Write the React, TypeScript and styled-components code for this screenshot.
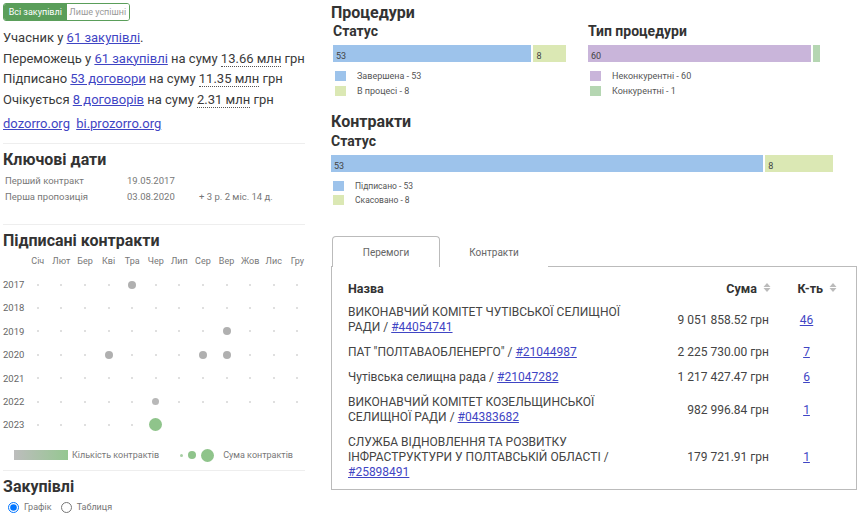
import styled, { createGlobalStyle } from "styled-components";

const GlobalStyle = createGlobalStyle`
  body {
    margin: 0;
    background: #fff;
    font-family: Roboto, "Liberation Sans", sans-serif;
    color: #333;
  }
`;

const months = ["Січ", "Лют", "Бер", "Кві", "Тра", "Чер", "Лип", "Сер", "Вер", "Жов", "Лис", "Гру"];

// dot size per year/month: 0 = none, 1 = tiny, 2 = grey, 3 = small grey, 4 = big green
const calendar: { year: string; cells: number[] }[] = [
  { year: "2017", cells: [1, 1, 1, 1, 2, 1, 1, 1, 1, 1, 1, 1] },
  { year: "2018", cells: [1, 1, 1, 1, 1, 1, 1, 1, 1, 1, 1, 1] },
  { year: "2019", cells: [1, 1, 1, 1, 1, 1, 1, 1, 2, 1, 1, 1] },
  { year: "2020", cells: [1, 1, 1, 2, 1, 1, 1, 2, 2, 1, 1, 1] },
  { year: "2021", cells: [1, 1, 1, 1, 1, 1, 1, 1, 1, 1, 1, 1] },
  { year: "2022", cells: [1, 1, 1, 1, 1, 3, 1, 1, 1, 1, 1, 1] },
  { year: "2023", cells: [1, 1, 1, 1, 1, 4, 0, 0, 0, 0, 0, 0] },
];

const rows = [
  { name: "ВИКОНАВЧИЙ КОМІТЕТ ЧУТІВСЬКОЇ СЕЛИЩНОЇ РАДИ", code: "#44054741", sum: "9 051 858.52 грн", count: "46" },
  { name: "ПАТ \"ПОЛТАВАОБЛЕНЕРГО\"", code: "#21044987", sum: "2 225 730.00 грн", count: "7" },
  { name: "Чутівська селищна рада", code: "#21047282", sum: "1 217 427.47 грн", count: "6" },
  { name: "ВИКОНАВЧИЙ КОМІТЕТ КОЗЕЛЬЩИНСЬКОЇ СЕЛИЩНОЇ РАДИ", code: "#04383682", sum: "982 996.84 грн", count: "1" },
  { name: "СЛУЖБА ВІДНОВЛЕННЯ ТА РОЗВИТКУ ІНФРАСТРУКТУРИ У ПОЛТАВСЬКІЙ ОБЛАСТІ", code: "#25898491", sum: "179 721.91 грн", count: "1" },
];

const SortIcon = () => (
  <svg width="8" height="11" viewBox="0 0 8 11" style={{ marginLeft: 6 }}>
    <path d="M4 1 L7.5 5 H0.5 Z" fill="#bbb" />
    <path d="M4 10 L7.5 6 H0.5 Z" fill="#bbb" />
  </svg>
);

export default function App() {
  return (
    <>
      <GlobalStyle />
      <Page>
        <LeftColumn>
          <Toggle>
            <ToggleButton active>Всі закупівлі</ToggleButton>
            <ToggleButton>Лише успішні</ToggleButton>
          </Toggle>
          <Summary>
            <Line>
              Учасник у <Link>61 закупівлі</Link>.
            </Line>
            <Line>
              Переможець у <Link>61 закупівлі</Link> на суму <Amount>13.66 млн</Amount> грн
            </Line>
            <Line>
              Підписано <Link>53 договори</Link> на суму <Amount>11.35 млн</Amount> грн
            </Line>
            <Line>
              Очікується <Link>8 договорів</Link> на суму <Amount>2.31 млн</Amount> грн
            </Line>
            <Sites>
              <Link>dozorro.org</Link> <Link>bi.prozorro.org</Link>
            </Sites>
          </Summary>
          <Divider />
          <Heading>Ключові дати</Heading>
          <DatesTable>
            <DateCell>Перший контракт</DateCell>
            <DateCell>19.05.2017</DateCell>
            <DateCell />
            <DateCell>Перша пропозиція</DateCell>
            <DateCell>03.08.2020</DateCell>
            <DateCell>+ 3 р. 2 міс. 14 д.</DateCell>
          </DatesTable>
          <Divider />
          <Heading>Підписані контракти</Heading>
          <Calendar>
            <YearLabel />
            {months.map((m) => (
              <MonthLabel key={m}>{m}</MonthLabel>
            ))}
            {calendar.map((r) => (
              <CalendarRow key={r.year}>
                <YearLabel>{r.year}</YearLabel>
                {r.cells.map((c, i) => (
                  <Cell key={i}>{c > 0 && <Dot size={c} />}</Cell>
                ))}
              </CalendarRow>
            ))}
          </Calendar>
          <ChartLegend>
            <Gradient />
            <LegendNote>Кількість контрактів</LegendNote>
            <LegendDots>
              <Dot size={5} />
              <Dot size={6} />
              <Dot size={4} />
            </LegendDots>
            <LegendNote>Сума контрактів</LegendNote>
          </ChartLegend>
          <Divider />
          <Heading>Закупівлі</Heading>
          <Radios>
            <RadioLabel>
              <input type="radio" name="view" defaultChecked /> Графік
            </RadioLabel>
            <RadioLabel>
              <input type="radio" name="view" /> Таблиця
            </RadioLabel>
          </Radios>
        </LeftColumn>

        <RightColumn>
          <Heading>Процедури</Heading>
          <ChartPair>
            <div>
              <SubHeading>Статус</SubHeading>
              <Bar width={233}>
                <Segment color="#9dc3eb" grow={53}>53</Segment>
                <Segment color="#dbe8b4" grow={8}>8</Segment>
              </Bar>
              <Legend>
                <LegendItem><Swatch color="#9dc3eb" />Завершена - 53</LegendItem>
                <LegendItem><Swatch color="#dbe8b4" />В процесі - 8</LegendItem>
              </Legend>
            </div>
            <div>
              <SubHeading>Тип процедури</SubHeading>
              <Bar width={232}>
                <Segment color="#c9b5da" grow={60}>60</Segment>
                <Segment color="#b5d6b2" grow={1} />
              </Bar>
              <Legend>
                <LegendItem><Swatch color="#c9b5da" />Неконкурентні - 60</LegendItem>
                <LegendItem><Swatch color="#b5d6b2" />Конкурентні - 1</LegendItem>
              </Legend>
            </div>
          </ChartPair>
          <Heading>Контракти</Heading>
          <SubHeading>Статус</SubHeading>
          <Bar width={502}>
            <Segment color="#9dc3eb" grow={53}>53</Segment>
            <Segment color="#dbe8b4" grow={8}>8</Segment>
          </Bar>
          <Legend small>
            <LegendItem><Swatch color="#9dc3eb" />Підписано - 53</LegendItem>
            <LegendItem><Swatch color="#dbe8b4" />Скасовано - 8</LegendItem>
          </Legend>

          <Tabs>
            <Tab active>Перемоги</Tab>
            <Tab>Контракти</Tab>
          </Tabs>
          <Panel>
            <Table>
              <thead>
                <tr>
                  <Th>Назва</Th>
                  <Th align="right">Сума<SortIcon /></Th>
                  <Th align="right">К-ть<SortIcon /></Th>
                </tr>
              </thead>
              <tbody>
                {rows.map((r) => (
                  <tr key={r.code}>
                    <Td>
                      {r.name} / <Link>{r.code}</Link>
                    </Td>
                    <Td align="right">{r.sum}</Td>
                    <Td align="center">
                      <Link>{r.count}</Link>
                    </Td>
                  </tr>
                ))}
              </tbody>
            </Table>
          </Panel>
        </RightColumn>
      </Page>
    </>
  );
}

const Page = styled.div`
  display: flex;
  gap: 26px;
  padding: 3px 0 0 3px;
  width: 868px;
  box-sizing: border-box;
`;

const LeftColumn = styled.div`
  width: 302px;
  display: flex;
  flex-direction: column;
`;

const RightColumn = styled.div`
  width: 525px;
  display: flex;
  flex-direction: column;
  margin-top: -1px;
`;

const Toggle = styled.div`
  display: flex;
  width: 127px;
  height: 18px;
  border: 1px solid #5a9e5a;
  border-radius: 3px;
  overflow: hidden;
  box-sizing: border-box;
`;

const ToggleButton = styled.div<{ active?: boolean }>`
  flex: 1;
  font-size: 9px;
  line-height: 16px;
  text-align: center;
  white-space: nowrap;
  background: ${(p) => (p.active ? "#5a9e5a" : "#fff")};
  color: ${(p) => (p.active ? "#fff" : "#999")};
`;

const Summary = styled.div`
  margin-top: 7px;
  font-size: 13px;
  line-height: 20.5px;
  color: #3a3a3a;
`;

const Line = styled.div``;

const Sites = styled.div`
  margin-top: 4px;
  word-spacing: 3px;
`;

const Link = styled.a`
  color: #3f45c4;
  text-decoration: underline;
  cursor: pointer;
`;

const Amount = styled.span`
  border-bottom: 1px dotted #555;
`;

const Divider = styled.hr`
  border: none;
  border-top: 1px solid #eee;
  margin: 8px 0 5px;
  width: 100%;
`;

const Heading = styled.h2`
  margin: 0;
  font-size: 16px;
  font-weight: 700;
  line-height: 22px;
  color: #333;
`;

const SubHeading = styled.h3`
  margin: 0;
  font-size: 14px;
  font-weight: 700;
  line-height: 17px;
  color: #333;
`;

const DatesTable = styled.div`
  display: grid;
  grid-template-columns: 122px 72px 1fr;
  padding: 2px 0 0 2px;
  font-size: 9.5px;
  line-height: 16px;
  color: #777;
  margin-bottom: 11px;
`;

const DateCell = styled.div``;

const Calendar = styled.div`
  display: grid;
  grid-template-columns: 23px repeat(12, 23.6px);
  grid-auto-rows: 23.4px;
  margin-top: -2px;
`;

const CalendarRow = styled.div`
  display: contents;
`;

const MonthLabel = styled.div`
  font-size: 9px;
  color: #777;
  display: flex;
  align-items: center;
  justify-content: center;
`;

const YearLabel = styled.div`
  font-size: 9.5px;
  color: #666;
  display: flex;
  align-items: center;
`;

const Cell = styled.div`
  display: flex;
  align-items: center;
  justify-content: center;
`;

const dotSizes: Record<number, [number, string]> = {
  1: [2, "#d4d4d4"],
  2: [8, "#b0b0b0"],
  3: [7, "#b8b8b8"],
  4: [13, "#8fc48b"],
  5: [3, "#a8cfa5"],
  6: [8, "#8fc48b"],
};

const Dot = styled.span<{ size: number }>`
  display: inline-block;
  width: ${(p) => dotSizes[p.size][0]}px;
  height: ${(p) => dotSizes[p.size][0]}px;
  border-radius: 50%;
  background: ${(p) => dotSizes[p.size][1]};
`;

const ChartLegend = styled.div`
  display: flex;
  align-items: center;
  margin-top: 12px;
  padding-left: 11px;
`;

const Gradient = styled.div`
  width: 54px;
  height: 10px;
  background: linear-gradient(to right, #bdbdbd, #95c791);
  margin-right: 4px;
`;

const LegendNote = styled.span`
  font-size: 9px;
  color: #777;
`;

const LegendDots = styled.span`
  display: flex;
  align-items: center;
  gap: 5px;
  margin: 0 9px 0 21px;
`;

const Radios = styled.div`
  display: flex;
  gap: 4px;
  margin-top: 4px;
`;

const RadioLabel = styled.label`
  display: flex;
  align-items: center;
  font-size: 9px;
  color: #777;
  input {
    margin: 0 5px 0 5px;
    width: 11px;
    height: 11px;
  }
`;

const ChartPair = styled.div`
  display: grid;
  grid-template-columns: 235px 235px;
  gap: 20px;
  margin: -1px 0 15px 2px;
`;

const Bar = styled.div<{ width: number }>`
  display: flex;
  gap: 2px;
  width: ${(p) => p.width}px;
  height: 17px;
  margin-top: 5px;
`;

const Segment = styled.div<{ color: string; grow: number }>`
  flex: ${(p) => p.grow} 1 0;
  background: ${(p) => p.color};
  font-size: 9px;
  color: #444;
  padding: 6px 0 0 3px;
  box-sizing: border-box;
  overflow: hidden;
  min-width: 2px;
`;

const Legend = styled.div<{ small?: boolean }>`
  display: flex;
  flex-direction: column;
  gap: ${(p) => (p.small ? 4 : 5)}px;
  margin-top: 9px;
  font-size: ${(p) => (p.small ? 8.5 : 9)}px;
  color: #555;
`;

const LegendItem = styled.div`
  display: flex;
  align-items: center;
  line-height: 10px;
`;

const Swatch = styled.span<{ color: string }>`
  width: 11px;
  height: 10px;
  background: ${(p) => p.color};
  margin: 0 11px 0 2px;
`;

const Tabs = styled.div`
  display: flex;
  margin-top: 31px;
  padding-left: 1px;
`;

const Tab = styled.div<{ active?: boolean }>`
  width: 108px;
  height: 31px;
  box-sizing: border-box;
  font-size: 10px;
  color: #666;
  display: flex;
  align-items: center;
  justify-content: center;
  border: 1px solid ${(p) => (p.active ? "#bbb" : "transparent")};
  border-bottom: none;
  border-radius: 4px 4px 0 0;
  background: #fff;
  margin-bottom: -1px;
  position: relative;
  z-index: 1;
`;

const Panel = styled.div`
  border: 1px solid #bbb;
  width: 526px;
  height: 224px;
  box-sizing: border-box;
  padding: 10px 14px 0 14px;
`;

const Table = styled.table`
  width: 100%;
  border-collapse: collapse;
  font-size: 12px;
  line-height: 15px;
`;

const Th = styled.th<{ align?: string }>`
  text-align: ${(p) => p.align ?? "left"};
  font-weight: 700;
  font-size: 12.5px;
  padding: 4px 4px 4px 2px;
  color: #333;
  &:first-child {
    width: 290px;
  }
  &:last-child {
    width: 60px;
    padding-right: 5px;
  }
`;

const Td = styled.td<{ align?: string }>`
  text-align: ${(p) => p.align ?? "left"};
  padding: 5px 6px 5px 2px;
  color: #444;
  vertical-align: middle;
`;
